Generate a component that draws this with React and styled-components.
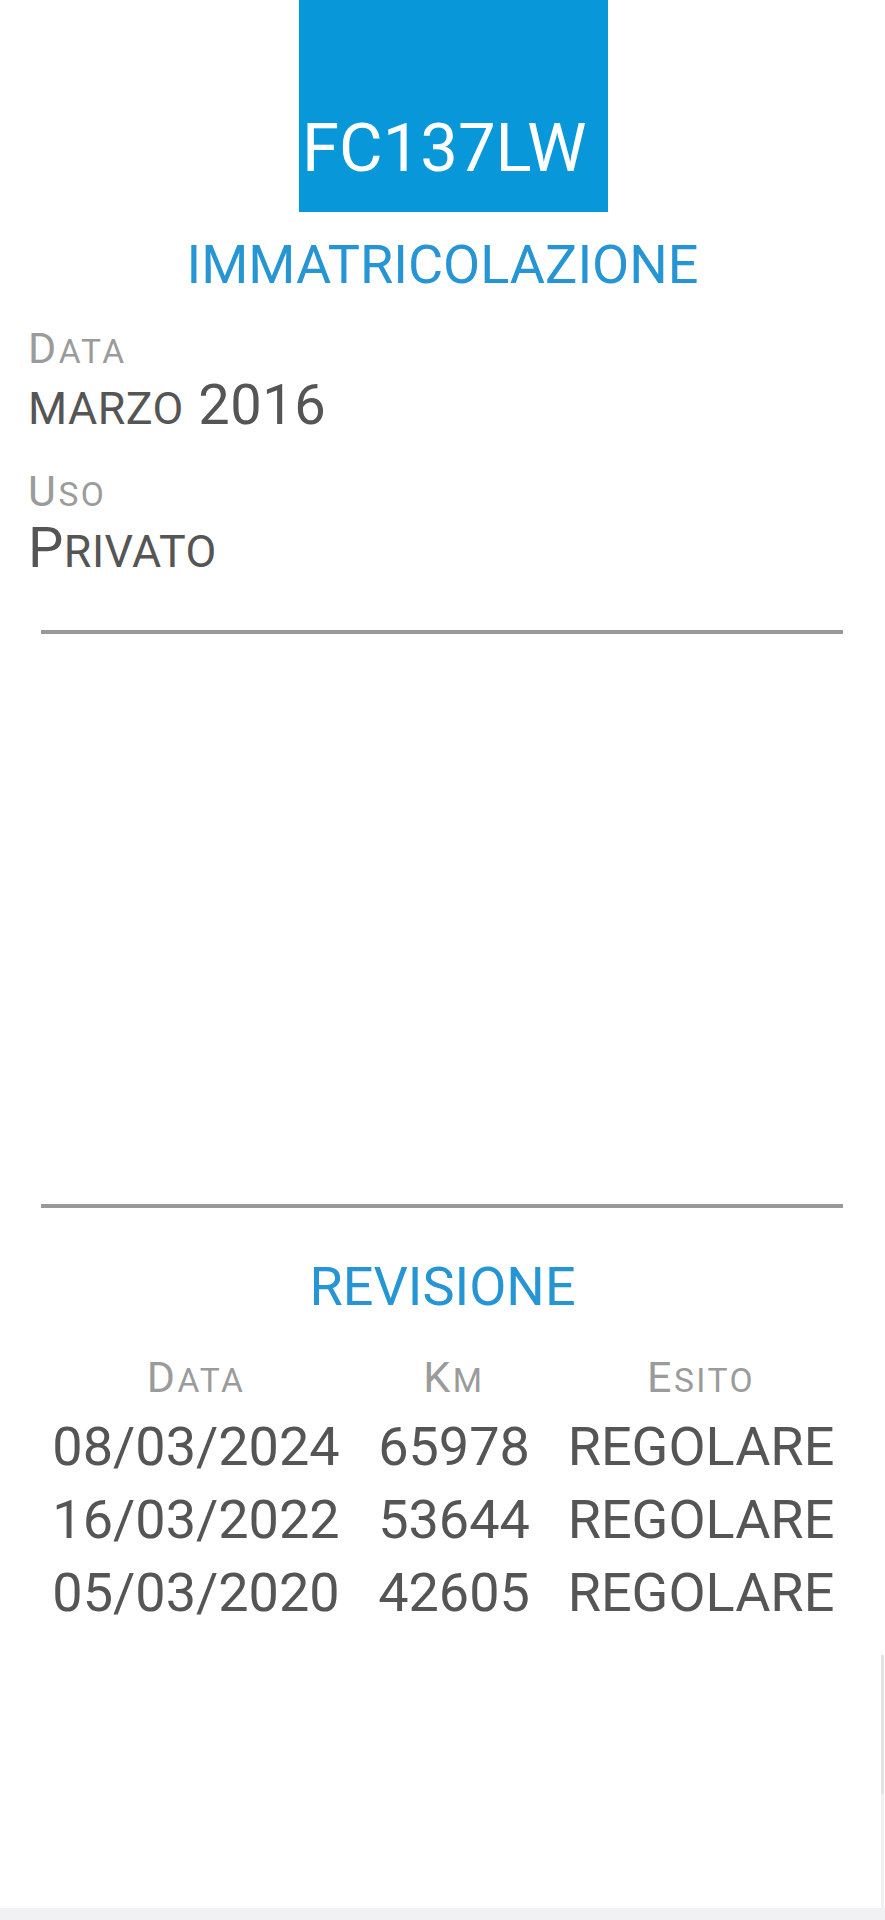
import styled, { createGlobalStyle } from 'styled-components';

const GlobalStyle = createGlobalStyle`
	html, body {
		margin: 0;
		padding: 0;
		background: #ffffff;
	}
	body {
		font-family: Roboto, "Noto Sans", "Liberation Sans", sans-serif;
	}
`;

const Page = styled.div`
	position: relative;
	width: 885px;
	height: 1920px;
	display: flex;
	flex-direction: column;
	background: #ffffff;
	overflow: hidden;
`;

const Plate = styled.div`
	width: 309px;
	height: 212px;
	margin-left: 299px;
	box-sizing: border-box;
	padding: 0 0 30px 3px;
	display: flex;
	align-items: flex-end;
	background: #0897d9;
	color: #ffffff;
	font-size: 67px;
	line-height: 67px;
	white-space: nowrap;
`;

const SectionTitle = styled.h2`
	margin: ${(p) => p.$top}px 0 0;
	font-size: 54px;
	line-height: 54px;
	font-weight: 400;
	text-align: center;
	color: #2595d3;
	white-space: nowrap;
`;

const Fields = styled.div`
	display: flex;
	flex-direction: column;
	padding: 35px 0 0 28px;
`;

const Label = styled.div`
	margin-top: ${(p) => (p.$first ? 0 : 37)}px;
	font-size: 43px;
	line-height: 43px;
	letter-spacing: 2.5px;
	color: #9b9b9b;
`;

const Value = styled.div`
	margin-top: 7px;
	font-size: 56px;
	line-height: 56px;
	letter-spacing: 0.5px;
	color: #555555;
`;

const Divider = styled.hr`
	margin: ${(p) => p.$top}px 42px 0 41px;
	height: 4px;
	border: none;
	background: #999999;
`;

const Blank = styled.div`
	height: 570px;
`;

const Small = styled.span`
	font-size: ${(p) => p.$scale || 0.78}em;
	line-height: 1;
	text-transform: uppercase;
`;

const gridColumns = `
	display: grid;
	grid-template-columns: 312px 204px 290px;
	padding-left: 40px;
	text-align: center;
	white-space: nowrap;
`;

const HeadRow = styled.div`
	${gridColumns}
	margin-top: 42px;
	margin-bottom: 11px;
	font-size: 43px;
	line-height: 43px;
	letter-spacing: 2.5px;
	color: #9b9b9b;
`;

const Row = styled.div`
	${gridColumns}
	font-size: 54px;
	line-height: 73px;
	color: #555555;
`;

const Cell = styled.span``;

const BottomBar = styled.div`
	margin-top: auto;
	height: 12px;
	background: #f1f1f3;
`;

const Scrollbar = styled.div`
	position: absolute;
	right: 1px;
	top: 1655px;
	width: 3px;
	height: 253px;
	background: linear-gradient(#e4e4e4 0 55%, #f0f0f0 55% 100%);
`;

// lowercase letters are drawn as smaller capitals, as on the device
const SmallCaps = ({ text, scale }) => {
	const parts = text.match(/[a-zà-ù]+|[^a-zà-ù]+/g) || [];
	return parts.map((part, i) =>
		/[a-zà-ù]/.test(part) ? (
			<Small key={i} $scale={scale}>{part}</Small>
		) : (
			<span key={i}>{part}</span>
		)
	);
};

const revisioni = [
	{ data: '08/03/2024', km: '65978', esito: 'REGOLARE' },
	{ data: '16/03/2022', km: '53644', esito: 'REGOLARE' },
	{ data: '05/03/2020', km: '42605', esito: 'REGOLARE' },
];

const App = () => {
	return (
		<Page>
			<GlobalStyle />
			<Plate>FC137LW</Plate>
			<SectionTitle $top={26}>IMMATRICOLAZIONE</SectionTitle>
			<Fields>
				<Label $first>
					<SmallCaps text="Data" />
				</Label>
				<Value>
					<SmallCaps text="marzo 2016" scale={0.8} />
				</Value>
				<Label>
					<SmallCaps text="Uso" />
				</Label>
				<Value>
					<SmallCaps text="Privato" scale={0.8} />
				</Value>
			</Fields>
			<Divider $top={54} />
			<Blank />
			<Divider $top={0} />
			<SectionTitle $top={52}>REVISIONE</SectionTitle>
			<HeadRow>
				<Cell><SmallCaps text="Data" /></Cell>
				<Cell><SmallCaps text="Km" /></Cell>
				<Cell><SmallCaps text="Esito" /></Cell>
			</HeadRow>
			{revisioni.map((r) => (
				<Row key={r.data}>
					<Cell>{r.data}</Cell>
					<Cell>{r.km}</Cell>
					<Cell>{r.esito}</Cell>
				</Row>
			))}
			<BottomBar />
			<Scrollbar />
		</Page>
	);
};

export default App;
